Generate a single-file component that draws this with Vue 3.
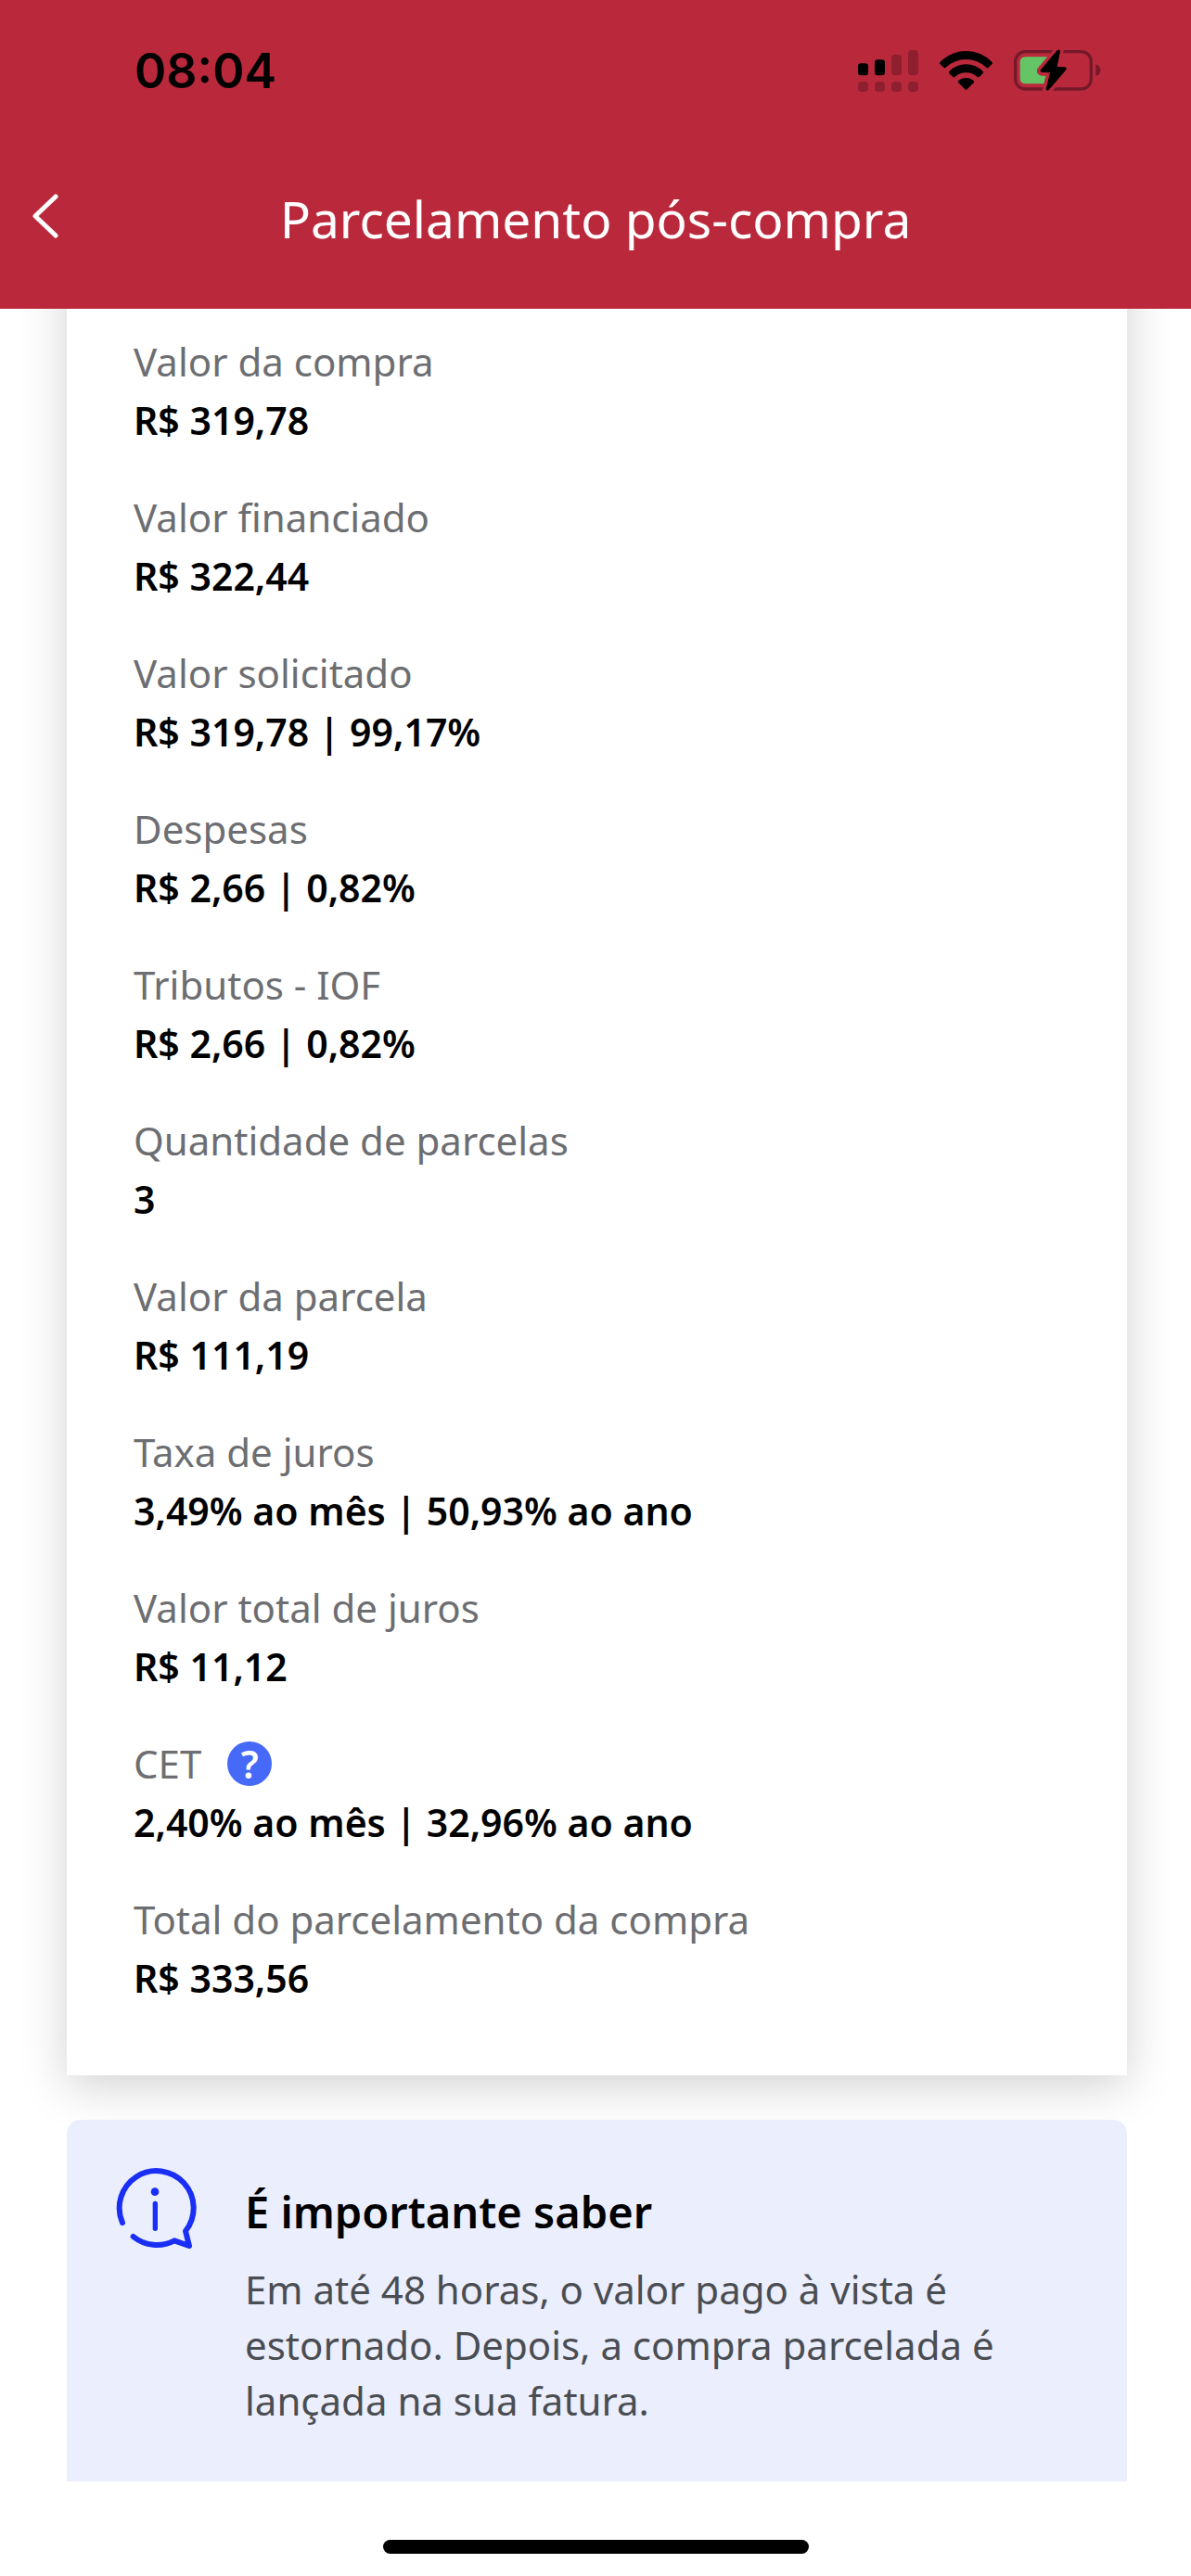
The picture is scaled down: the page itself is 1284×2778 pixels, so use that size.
<script setup>
const details = [
  { label: 'Valor da compra', value: 'R$ 319,78' },
  { label: 'Valor financiado', value: 'R$ 322,44' },
  { label: 'Valor solicitado', value: 'R$ 319,78 | 99,17%' },
  { label: 'Despesas', value: 'R$ 2,66 | 0,82%' },
  { label: 'Tributos - IOF', value: 'R$ 2,66 | 0,82%' },
  { label: 'Quantidade de parcelas', value: '3' },
  { label: 'Valor da parcela', value: 'R$ 111,19' },
  { label: 'Taxa de juros', value: '3,49% ao mês | 50,93% ao ano' },
  { label: 'Valor total de juros', value: 'R$ 11,12' },
  { label: 'CET', value: '2,40% ao mês | 32,96% ao ano', help: true },
  { label: 'Total do parcelamento da compra', value: 'R$ 333,56' },
]
</script>

<template>
  <div class="screen">
    <header class="header">
      <div class="status">
        <time class="clock">08:04</time>
        <div class="indicators">
          <svg width="65" height="45" viewBox="0 0 195 135" aria-hidden="true">
            <g fill="#000">
              <rect x="0" y="43" width="33" height="39" rx="10" />
              <rect x="54" y="31" width="33" height="51" rx="10" />
            </g>
            <g fill="#8d1f2e">
              <rect x="108" y="15" width="33" height="67" rx="12" />
              <rect x="162" y="0" width="33" height="82" rx="12" />
              <rect x="0" y="102" width="33" height="33" rx="12" />
              <rect x="54" y="102" width="33" height="33" rx="12" />
              <rect x="108" y="102" width="33" height="33" rx="12" />
              <rect x="162" y="102" width="33" height="33" rx="12" />
            </g>
          </svg>
          <svg width="57" height="42" viewBox="0 0 171 126" aria-hidden="true">
            <path d="M2 35 Q38 0 85.500 0 Q133 0 169 35 Q173 39 169 43 L158 53 Q155 56 151 53 Q122 27 85.500 27 Q49 27 20 53 Q16 56 13 53 L2 43 Q-2 39 2 35Z" />
            <path d="M31 66 Q54 43 85.500 43 Q117 43 140 66 Q143 70 140 73 L129 83 Q125 87 121 83 Q106 70 85.500 70 Q65 70 50 83 Q46 87 42 83 L31 73 Q28 70 31 66Z" />
            <path d="M61 96 Q71 87 85.500 87 Q100 87 110 96 Q113 100 110 103 L89 124 Q85.500 127 82 124 L61 103 Q58 100 61 96Z" />
          </svg>
          <svg width="94" height="46" viewBox="0 0 282 138" aria-hidden="true">
            <rect x="5" y="8" width="245" height="121" rx="32" fill="none" stroke="#75192a" stroke-width="10" />
            <path d="M265 49 Q280 54 280 68 Q280 83 265 87Z" fill="#75192a" />
            <path d="M38 25 H125 V112 H38 Q20 112 20 94 V43 Q20 25 38 25Z" fill="#65c466" />
            <path
              d="M140 4 L87 67 Q83 74 91 75 L117 76 L104 130 Q106 138 114 131 L169 67 Q173 60 165 58 L140 57 L150 6 Q147 -2 140 4Z"
              fill="#000" stroke="#ba293b" stroke-width="22" stroke-linejoin="round" paint-order="stroke"
            />
          </svg>
        </div>
      </div>
      <nav class="nav">
        <button class="back" type="button" aria-label="Voltar">
          <svg width="28" height="48" viewBox="0 0 28 48" aria-hidden="true">
            <path d="M25 3 L3 24 L25 45" fill="none" stroke="#fff" stroke-width="5" stroke-linecap="round" stroke-linejoin="round" />
          </svg>
        </button>
        <h1 class="title">Parcelamento pós-compra</h1>
      </nav>
    </header>

    <main class="content">
      <dl class="card">
        <div v-for="item in details" :key="item.label" class="row">
          <dt class="label">
            {{ item.label }}
            <button v-if="item.help" class="help" type="button" aria-label="O que é CET">?</button>
          </dt>
          <dd class="value">{{ item.value }}</dd>
        </div>
      </dl>

      <section class="info">
        <svg class="info-icon" width="88" height="90" viewBox="45 48 264 270" fill="none" stroke="#1a2ff5" stroke-width="18" stroke-linecap="round" stroke-linejoin="round" aria-hidden="true">
          <path d="M66 231 A120 120 0 1 1 270 258 L282 306 L234 289 A121 121 0 0 1 101 276" />
          <path d="M172 169 V250" stroke-width="16" />
          <circle cx="171" cy="131" r="13" fill="#1a2ff5" stroke="none" />
        </svg>
        <div class="info-text">
          <h2 class="info-title">É importante saber</h2>
          <p class="info-body">Em até 48 horas, o valor pago à vista é estornado. Depois, a compra parcelada é lançada na sua fatura.</p>
        </div>
      </section>
    </main>

    <footer class="home"><span class="home-bar"></span></footer>
  </div>
</template>

<style>
body {
  margin: 0;
  background: #fff;
}
</style>

<style scoped>
.screen {
  font-family: "Noto Sans", "Open Sans", sans-serif;
  background: #fff;
  color: #000;
}

.header {
  position: relative;
  z-index: 1;
  padding-bottom: 17px;
  background: #ba293b;
}

.status {
  display: flex;
  align-items: center;
  justify-content: space-between;
  height: 152px;
  padding: 0 97px 0 145px;
}

.clock {
  padding-top: 2px;
  font-family: Inter, sans-serif;
  font-size: 52px;
  font-weight: 600;
  line-height: 64px;
}

.indicators {
  display: flex;
  align-items: center;
  gap: 23px;
}

.nav {
  display: grid;
  grid-template-columns: 1fr auto 1fr;
  align-items: center;
  height: 164px;
}

.back {
  justify-self: start;
  display: flex;
  padding: 0 35px 2px;
  border: 0;
  background: none;
}

.title {
  margin: 0;
  padding-top: 4px;
  color: #fff;
  font-size: 55px;
  font-weight: 400;
  line-height: 72px;
}

.content {
  padding: 0 69px 0 72px;
  overflow: hidden;
}

.card {
  display: flex;
  flex-direction: column;
  gap: 42px;
  margin: -72px 0 0;
  padding: 97px 72px 74px;
  background: #fff;
  box-shadow: 0 12px 48px rgba(0, 0, 0, 0.18);
}

.label {
  display: flex;
  align-items: center;
  gap: 28px;
  color: #6d6e71;
  font-size: 42px;
  line-height: 64px;
}

.help {
  width: 48px;
  height: 48px;
  padding: 0;
  border: 0;
  border-radius: 50%;
  background: #4669f8;
  color: #fff;
  font-family: inherit;
  font-size: 41px;
  font-weight: 600;
  line-height: 48px;
}

.value {
  margin: 0;
  font-size: 41px;
  font-weight: 600;
  line-height: 62px;
}

.info {
  position: relative;
  display: flex;
  gap: 51px;
  margin-top: 48px;
  padding: 50px 53px 57px;
  border-radius: 15px 15px 0 0;
  background: #ebeefd;
}

.info-icon {
  flex: none;
}

.info-text {
  padding-top: 19px;
}

.info-title {
  margin: 0 0 24px;
  font-size: 47px;
  font-weight: 600;
  line-height: 60px;
}

.info-body {
  margin: 0;
  color: #4a4d52;
  font-size: 42px;
  line-height: 60px;
}

.home {
  display: flex;
  justify-content: center;
  padding: 63px 0 24px;
}

.home-bar {
  width: 459px;
  height: 15px;
  border-radius: 8px;
  background: #000;
}
</style>
